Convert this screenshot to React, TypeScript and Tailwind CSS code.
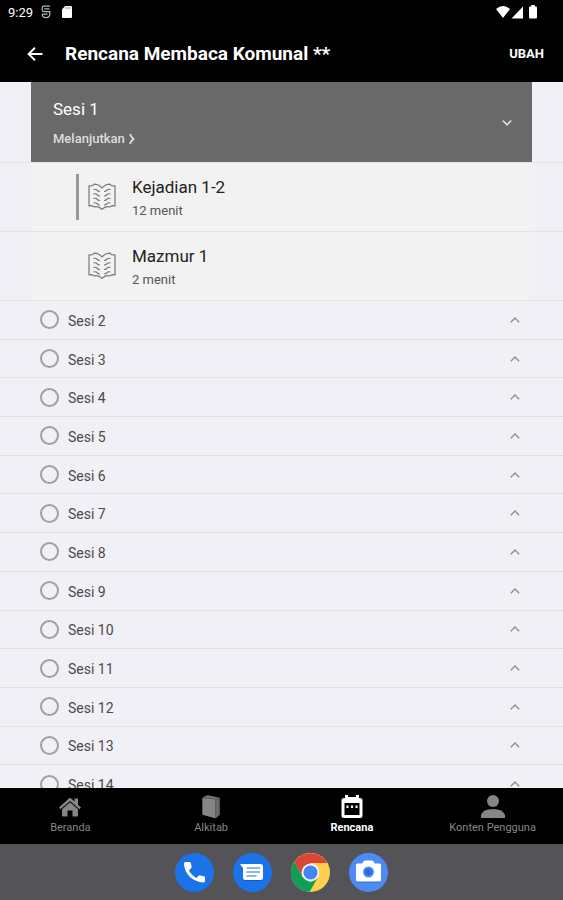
import { useState } from 'react';
import type { ReactNode } from 'react';

const readings = [
  { title: 'Kejadian 1-2', duration: '12 menit', current: true },
  { title: 'Mazmur 1', duration: '2 menit', current: false },
];

const sessions = [2, 3, 4, 5, 6, 7, 8, 9, 10, 11, 12, 13, 14];

function StatusBar() {
  return (
    <div className="flex h-6 shrink-0 items-center justify-between pr-[25px] pl-2 text-white">
      <div className="flex items-center gap-2">
        <span className="pt-px text-[13px] leading-6">9:29</span>
        <svg width="10" height="14" viewBox="0 0 10 14" fill="none" stroke="#b5b5b5" strokeWidth="1.2">
          <path d="M9 1.2H3Q1.2 1.2 1.2 3V4.9Q1.2 6.6 3 6.6H8.8V9Q8.8 12.6 5 12.6Q1.2 12.6 1.2 9M3.2 3.9H8.5M1.2 9.2H6.5" />
        </svg>
        <svg className="ml-0.5" width="12" height="14" viewBox="0 0 12 14" fill="white">
          <path d="M4.2 1H9.8Q11 1 11 2.2V11.8Q11 13 9.8 13H2.2Q1 13 1 11.8V4.2Z" />
          <path d="M4.8 2v2M6.8 2v2M8.8 2v2" stroke="#777" strokeWidth=".8" />
        </svg>
      </div>
      <div className="flex items-center pb-px">
        <svg width="14" height="14" viewBox="0 0 14 14" fill="white">
          <path d="M0 4Q7-2 14 4L7 13Z" />
        </svg>
        <svg className="ml-px" width="13" height="14" viewBox="0 0 13 14" fill="white">
          <path d="M12 1.5V13.5H.5Z" />
        </svg>
        <svg className="ml-1" width="10" height="14" viewBox="0 0 10 14" fill="white">
          <path d="M3.3 0h3.4v1.5H8Q9 1.5 9 2.5v10Q9 13.5 8 13.5H2Q1 13.5 1 12.5v-10Q1 1.5 2 1.5h1.3Z" />
        </svg>
      </div>
    </div>
  );
}

function Header() {
  return (
    <header className="flex h-[58px] shrink-0 items-center pt-0.5 pr-[19px] pl-[27px] text-white">
      <button type="button" aria-label="Kembali">
        <svg width="16" height="14" viewBox="0 0 16 14" fill="none" stroke="white" strokeWidth="1.9">
          <path d="M15.5 7H1.8M8 .8L1.6 7L8 13.2" />
        </svg>
      </button>
      <h1 className="ml-[22px] flex-1 text-[19px] font-bold">Rencana Membaca Komunal **</h1>
      <button type="button" className="text-[13px] font-bold">
        UBAH
      </button>
    </header>
  );
}

function OpenBook() {
  return (
    <svg width="28" height="28" viewBox="0 0 28 28" fill="none" stroke="#777" strokeWidth="1.2" strokeLinejoin="round">
      <path d="M14 4.8Q10.5 1.2 6 1.2L4.6 2.6L1 2.8V22.8L4 22.6Q5 23.8 6.5 23.8Q11 23 14 26.4Q17 23 21.5 23.8Q23 23.8 24 22.6L27 22.8V2.8L23.4 2.6L22 1.2Q17.5 1.2 14 4.8Z" />
      <path d="M5.5 6.5Q8 5.8 9 7.2T12 8.5M5.5 11Q8 10.3 9 11.7T12 13M5.5 15.5Q8 14.8 9 16.2T12 17.5M5.5 20Q8 19.3 9 20.7T12 22M22.5 6.5Q20 5.8 19 7.2T16 8.5M22.5 11Q20 10.3 19 11.7T16 13M22.5 15.5Q20 14.8 19 16.2T16 17.5M22.5 20Q20 19.3 19 20.7T16 22" />
    </svg>
  );
}

function CurrentSession() {
  return (
    <section>
      <div className="border-b border-[#e5e5e9] px-[31px]">
        <div className="flex h-20 items-center justify-between bg-[#696969] pr-5 pl-[22px] text-white">
          <div className="pt-0.5">
            <h2 className="text-[17px] leading-6">Sesi 1</h2>
            <a href="#lanjut" className="mt-2 flex items-center gap-1 text-[13px] leading-5 font-medium text-[#dedede]">
              Melanjutkan
              <svg width="6" height="12" viewBox="0 0 6 12" fill="none" stroke="#dedede" strokeWidth="1.8">
                <path d="M1 1Q2 4 4.5 6Q2 8 1 11" />
              </svg>
            </a>
          </div>
          <button type="button" aria-label="Tutup Sesi 1" className="pt-0.5">
            <svg width="10" height="8" viewBox="0 0 10 8" fill="none" stroke="#dedede" strokeWidth="1.6">
              <path d="M.8 1.5L5 5.8L9.2 1.5" />
            </svg>
          </button>
        </div>
      </div>
      <ul>
        {readings.map((reading) => (
          <li key={reading.title} className="border-b border-[#e3e3e7] px-[31px]">
            <a href="#bacaan" className="flex h-[68px] items-center bg-[#f2f2f2] pl-[45px]">
              <span className={reading.current ? 'h-[46px] w-[3px] bg-[#999]' : 'h-[46px] w-[3px]'} />
              <span className="ml-[9px]">
                <OpenBook />
              </span>
              <span className="ml-4 pt-[3px]">
                <span className="block text-[17px] leading-6 text-[#222]">{reading.title}</span>
                <span className="block text-[13px] leading-6 text-[#555]">{reading.duration}</span>
              </span>
            </a>
          </li>
        ))}
      </ul>
    </section>
  );
}

function SessionList() {
  const [done, setDone] = useState<number[]>([]);

  const toggle = (session: number) => {
    setDone(done.includes(session) ? done.filter((s) => s !== session) : [...done, session]);
  };

  return (
    <ul className="grid min-h-[503px] auto-rows-fr">
      {sessions.map((session) => (
        <li key={session} className="flex items-center justify-between border-b border-[#e1e1e6] pr-[43px] pl-10">
          <label className="flex items-center gap-[9px] text-sm text-[#4a4a4a]">
            <input
              type="checkbox"
              checked={done.includes(session)}
              onChange={() => toggle(session)}
              className="size-[19px] appearance-none rounded-full border-2 border-[#a0a0a3] checked:bg-[#a0a0a3]"
            />
            <span className="pt-0.5">Sesi {session}</span>
          </label>
          <button type="button" aria-label={`Buka Sesi ${session}`}>
            <svg width="10" height="8" viewBox="0 0 10 8" fill="none" stroke="#909093" strokeWidth="1.4">
              <path d="M.8 6.2L5 2L9.2 6.2" />
            </svg>
          </button>
        </li>
      ))}
    </ul>
  );
}

function NavItem({ label, active, children }: { label: string; active?: boolean; children: ReactNode }) {
  return (
    <a
      href="#menu"
      className={
        active
          ? 'flex flex-1 flex-col items-center pt-1.5 text-[11px] leading-4 font-bold text-white'
          : 'flex flex-1 flex-col items-center pt-1.5 text-[11px] leading-4 text-[#868686]'
      }
    >
      <svg width="26" height="26" viewBox="0 0 26 26" fill="currentColor">
        {children}
      </svg>
      {label}
    </a>
  );
}

function BottomNav() {
  return (
    <nav className="flex h-14 shrink-0">
      <NavItem label="Beranda">
        <path d="M2 13.6L11.8 4.6Q13 3.6 14.2 4.6L17.5 7.6V4.4H21V10.8L24 13.6L22.4 15.2L13 6.9L3.6 15.2Z" />
        <path d="M5 15.2L13 8.3L21 15.2V21.5Q21 22.5 20 22.5H15.5V16.5H10.5V22.5H6Q5 22.5 5 21.5Z" />
      </NavItem>
      <NavItem label="Alkitab">
        <path d="M4.5 3.5L9.5 1L22 3.8V20.5L18 24.5L4.5 20.5Z" fill="#5c5c5c" />
        <path d="M4.5 4.2L17 5.4V24L4.5 20.8Z" />
        <path d="M6 3L9.5 1.6L20 3.9L17 4.7Z" fill="#777" />
        <path d="M19.2 5.5V22" stroke="#858585" strokeWidth=".8" />
      </NavItem>
      <NavItem label="Rencana" active>
        <path d="M5 4H6V1H9V3H17V1H20V4H21Q23.5 4 23.5 6.5V21.5Q23.5 24 21 24H5Q2.5 24 2.5 21.5V6.5Q2.5 4 5 4Z" />
        <path d="M5.5 9H20.5V21H5.5Z" fill="black" />
        <path d="M7.5 11.5H9.5V14H7.5ZM12 11.5H14V14H12ZM16.5 11.5H18.5V14H16.5Z" />
      </NavItem>
      <NavItem label="Konten Pengguna">
        <circle cx="13" cy="7" r="6" />
        <path d="M1 24V21Q3 15 13 15Q23 15 25 21V24Z" />
      </NavItem>
    </nav>
  );
}

function Dock() {
  return (
    <footer className="flex h-14 shrink-0 items-center justify-center gap-[19px] bg-[#545357]">
      <button type="button" aria-label="Telepon">
        <svg width="39" height="39" viewBox="0 0 39 39">
          <circle cx="19.5" cy="19.5" r="19.5" fill="#1a73e8" />
          <path d="M10.3 9H14.4Q15.5 9 15.8 10L16.6 13.6Q16.8 14.6 16.1 15.3L13.8 17.5Q16.5 22.4 21.3 25L23.6 22.8Q24.3 22.2 25.2 22.4L29 23.2Q30 23.5 30 24.6V28Q30 29.4 28.5 29.4Q20.5 29 14.7 23.7Q9.3 18.2 8.9 10.5Q8.9 9 10.3 9Z" fill="white" />
        </svg>
      </button>
      <button type="button" aria-label="Pesan">
        <svg width="39" height="39" viewBox="0 0 39 39">
          <circle cx="19.5" cy="19.5" r="19.5" fill="#1a73e8" />
          <path d="M10 25Q10.5 28 13 28H27Q30 28 30 25Z" fill="#1559b8" />
          <path d="M7 11H27.5Q30 11 30 13.5V24.5Q30 27 27.5 27H12.5Q10 27 10 24.5V15Z" fill="white" />
          <path d="M13.5 15H27M13.5 19H27M13.5 23H23.5" stroke="#6c9fe5" strokeWidth="1.6" />
        </svg>
      </button>
      <button type="button" aria-label="Chrome">
        <svg width="39" height="39" viewBox="0 0 39 39">
          <circle cx="19.5" cy="19.5" r="19.5" fill="#ffd04b" />
          <path d="M3.5 8.4A19.5 19.5 0 0 1 36.3 10H19.5L11 23.5Z" fill="#db4437" />
          <path d="M3.5 8.4L11.3 24L19.5 29L26.5 25L18.5 39A19.5 19.5 0 0 1 3.5 8.4Z" fill="#109d58" />
          <circle cx="19.5" cy="19.5" r="9" fill="#f1f1f1" />
          <circle cx="19.5" cy="19.5" r="7" fill="#4285f4" />
        </svg>
      </button>
      <button type="button" aria-label="Kamera">
        <svg width="39" height="39" viewBox="0 0 39 39">
          <circle cx="19.5" cy="19.5" r="19.5" fill="#4c8bf5" />
          <path d="M7 27V29Q7 30 8.5 30H30.5Q32 30 32 28.5V27Z" fill="#3c79df" />
          <path d="M8.5 10.5H13L15 8Q15.4 7.5 16 7.5H23Q23.6 7.5 24 8L26 10.5H30.5Q32 10.5 32 12V27Q32 28.5 30.5 28.5H8.5Q7 28.5 7 27V12Q7 10.5 8.5 10.5Z" fill="white" />
          <circle cx="19.5" cy="19" r="5.5" fill="#4c8bf5" />
          <circle cx="19.5" cy="19" r="3.5" fill="#2f69d5" />
        </svg>
      </button>
    </footer>
  );
}

export default function App() {
  return (
    <div className="flex h-screen flex-col bg-black font-[Roboto,sans-serif]">
      <StatusBar />
      <Header />
      {/* Scrollable plan content */}
      <main className="min-h-0 flex-1 overflow-y-auto bg-[#f1f0f6] [scrollbar-width:none]">
        <CurrentSession />
        <SessionList />
      </main>
      <BottomNav />
      <Dock />
    </div>
  );
}
